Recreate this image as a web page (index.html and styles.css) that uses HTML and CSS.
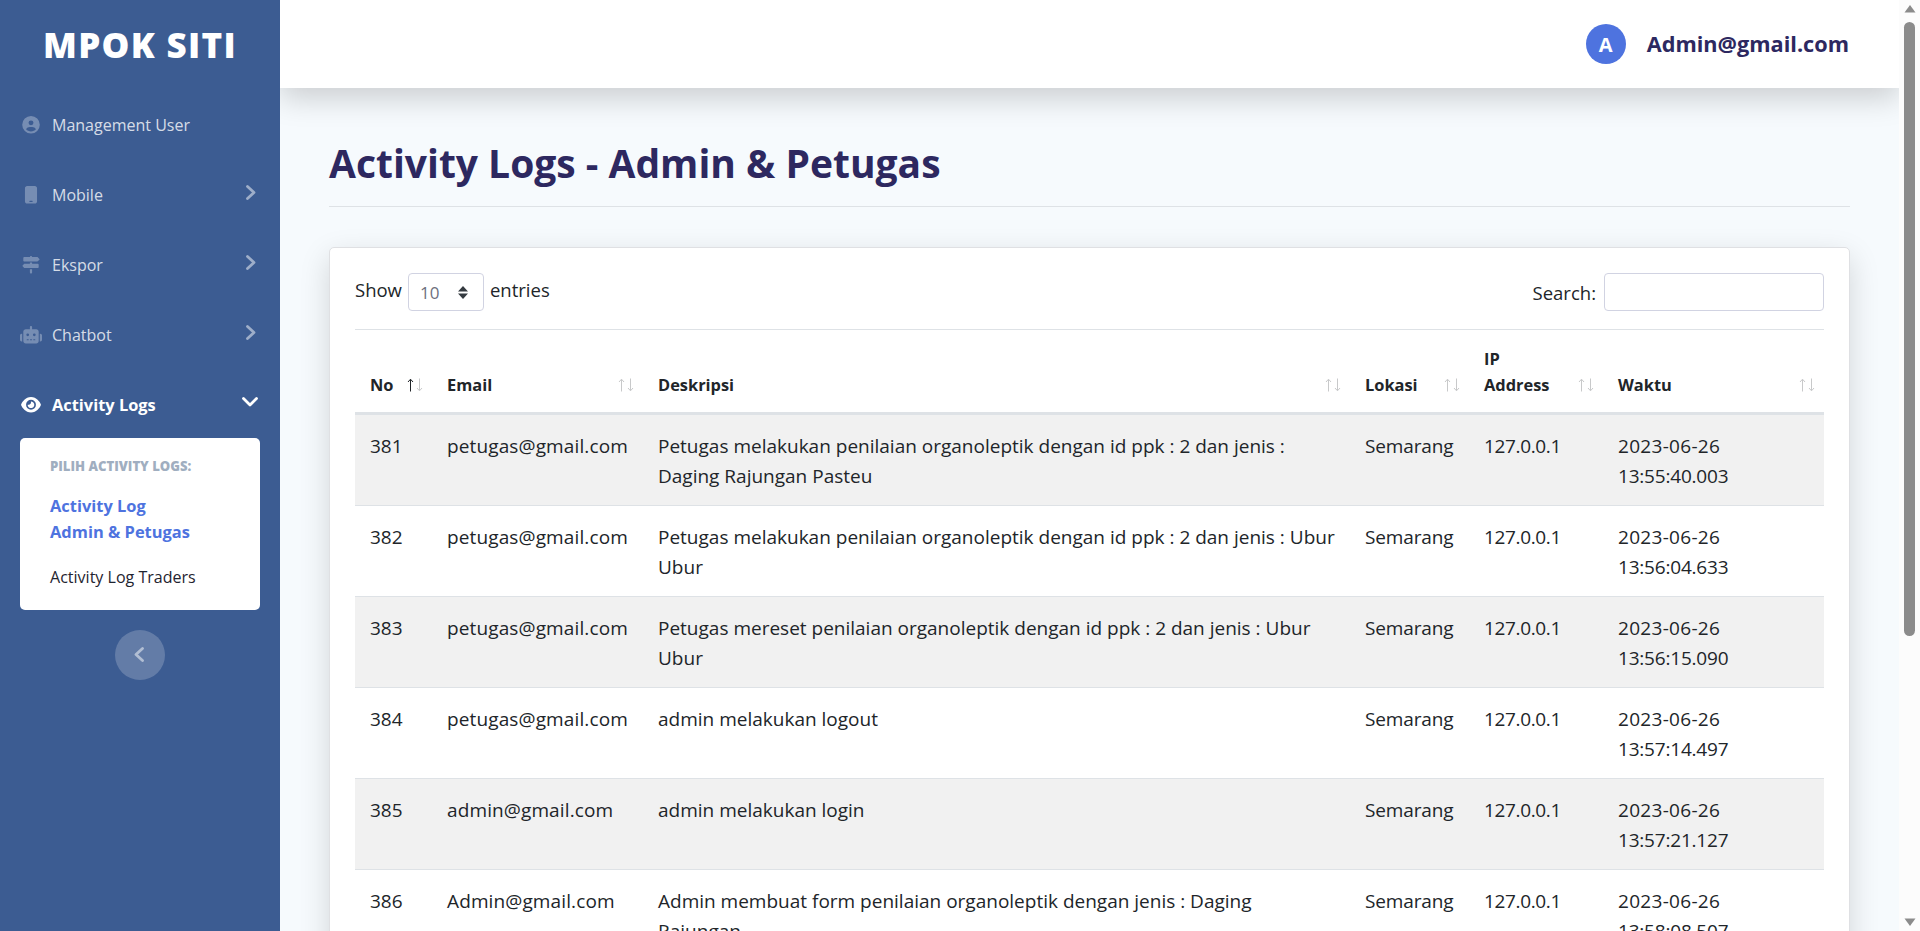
FILE: index.html
```html
<!DOCTYPE html>
<html lang="id">
<head>
<meta charset="utf-8">
<title>Activity Logs - Admin &amp; Petugas</title>
<link rel="stylesheet" href="styles.css">
</head>
<body>
<svg class="defs" width="0" height="0" aria-hidden="true">
  <symbol id="sort-up" viewBox="0 0 7 14"><path d="M3.5 13.5V1.5M1 4L3.5 1.2L6 4"/></symbol>
  <symbol id="sort-down" viewBox="0 0 7 14"><path d="M3.5 .5V12.5M1 10L3.5 12.8L6 10"/></symbol>
</svg>
<div class="app">
  <aside class="sidebar">
    <div class="brand">MPOK SITI</div>
    <nav class="menu">
      <a class="menu-item">
        <svg class="icon" width="17.6" height="17.6" viewBox="0 0 512 512"><path d="M399 384.200C376.900 345.800 335.400 320 288 320H224c-47.400 0-88.900 25.800-111 64.200c35.200 39.200 86.200 63.800 143 63.800s107.800-24.700 143-63.800zM0 256a256 256 0 1 1 512 0A256 256 0 1 1 0 256zm256 16a72 72 0 1 0 0-144 72 72 0 1 0 0 144z" fill-rule="evenodd"/></svg>
        <span>Management User</span>
      </a>
      <a class="menu-item">
        <svg class="icon" width="13.2" height="17.6" viewBox="0 0 384 512"><path fill-rule="evenodd" d="M16 64C16 28.700 44.700 0 80 0H304c35.300 0 64 28.700 64 64V448c0 35.300-28.700 64-64 64H80c-35.300 0-64-28.700-64-64V64zM144 448c0 8.800 7.200 16 16 16h64c8.800 0 16-7.200 16-16s-7.200-16-16-16H160c-8.800 0-16 7.200-16 16z"/></svg>
        <span>Mobile</span>
        <svg class="chev" width="10" height="15" viewBox="0 0 10 15"><path d="M1.500 1.500L8 7.500L1.500 13.500"/></svg>
      </a>
      <a class="menu-item">
        <svg class="icon" width="17.6" height="17.6" viewBox="0 0 512 512"><path d="M224 32H64C46.300 32 32 46.300 32 64v64c0 17.700 14.300 32 32 32H441.400c4.200 0 8.300-1.700 11.300-4.700l48-48c6.200-6.200 6.200-16.400 0-22.600l-48-48c-3-3-7.100-4.700-11.300-4.700H288c0-17.700-14.300-32-32-32s-32 14.300-32 32zM480 256c0-17.700-14.300-32-32-32H288V192H224v32H70.600c-4.200 0-8.300 1.700-11.300 4.700l-48 48c-6.200 6.200-6.200 16.400 0 22.600l48 48c3 3 7.100 4.700 11.300 4.700H448c17.700 0 32-14.300 32-32V256zM288 480V384H224v96c0 17.700 14.300 32 32 32s32-14.300 32-32z"/></svg>
        <span>Ekspor</span>
        <svg class="chev" width="10" height="15" viewBox="0 0 10 15"><path d="M1.500 1.500L8 7.500L1.500 13.500"/></svg>
      </a>
      <a class="menu-item">
        <svg class="icon" width="22" height="17.6" viewBox="0 0 640 512"><path fill-rule="evenodd" d="M320 0c17.700 0 32 14.300 32 32V96H472c39.800 0 72 32.200 72 72V440c0 39.800-32.200 72-72 72H168c-39.800 0-72-32.200-72-72V168c0-39.800 32.200-72 72-72H288V32c0-17.700 14.300-32 32-32zM208 384c-8.800 0-16 7.200-16 16s7.200 16 16 16h32c8.800 0 16-7.200 16-16s-7.200-16-16-16H208zm96 0c-8.800 0-16 7.200-16 16s7.200 16 16 16h32c8.800 0 16-7.200 16-16s-7.200-16-16-16H304zm96 0c-8.800 0-16 7.200-16 16s7.200 16 16 16h32c8.800 0 16-7.200 16-16s-7.200-16-16-16H400zM264 256a40 40 0 1 0-80 0 40 40 0 1 0 80 0zm152 40a40 40 0 1 0 0-80 40 40 0 1 0 0 80zM48 224H64V448H48c-26.500 0-48-21.500-48-48V272c0-26.500 21.500-48 48-48zm544 0c26.500 0 48 21.500 48 48V400c0 26.500-21.500 48-48 48H576V224h16z"/></svg>
        <span>Chatbot</span>
        <svg class="chev" width="10" height="15" viewBox="0 0 10 15"><path d="M1.500 1.500L8 7.500L1.500 13.500"/></svg>
      </a>
      <a class="menu-item active">
        <svg class="icon" width="19.8" height="17.6" viewBox="0 0 576 512"><path fill-rule="evenodd" d="M288 32c-80.800 0-145.500 36.800-192.600 80.600C48.600 156 17.300 208 2.500 243.700c-3.300 7.900-3.300 16.700 0 24.600C17.300 304 48.600 356 95.400 399.400C142.500 443.200 207.200 480 288 480s145.500-36.800 192.600-80.600c46.800-43.500 78.100-95.400 93-131.100c3.300-7.900 3.300-16.700 0-24.600c-14.900-35.700-46.200-87.700-93-131.100C433.500 68.800 368.800 32 288 32zM144 256a144 144 0 1 1 288 0 144 144 0 1 1 -288 0z"/><path d="M288 192c0 35.300-28.700 64-64 64c-7.100 0-13.900-1.200-20.300-3.300c-5.500-1.800-11.900 1.600-11.700 7.400c.3 6.900 1.300 13.800 3.200 20.700c13.700 51.200 66.400 81.600 117.600 67.900s81.600-66.400 67.900-117.600c-11.100-41.500-47.800-69.400-88.600-71.100c-5.800-.2-9.200 6.100-7.400 11.700c2.100 6.400 3.300 13.200 3.300 20.300z"/></svg>
        <span>Activity Logs</span>
        <svg class="chev" width="16" height="10" viewBox="0 0 16 10"><path d="M1.500 1.500L8 8L14.500 1.500"/></svg>
      </a>
    </nav>
    <div class="submenu">
      <h6 class="submenu-title">Pilih Activity Logs:</h6>
      <a class="submenu-link current">Activity Log<br>Admin &amp; Petugas</a>
      <a class="submenu-link">Activity Log Traders</a>
    </div>
    <button class="collapse"><svg width="10" height="15" viewBox="0 0 10 15"><path d="M8.500 1.500L2 7.500L8.500 13.500"/></svg></button>
  </aside>

  <div class="main">
    <header class="topbar">
      <span class="avatar">A</span>
      <span class="account">Admin@gmail.com</span>
    </header>
    <main class="content">
      <h1 class="title">Activity Logs - Admin &amp; Petugas</h1>
      <section class="card">
        <div class="controls">
          <div class="length">
            <span class="length-text">Show</span>
            <span class="select">10<svg width="10" height="13" viewBox="0 0 10 13"><path d="M5 0L10 5.500H0zM5 13L0 7.500H10z"/></svg></span>
            <span class="length-text">entries</span>
          </div>
          <label class="search">Search:<input type="text"></label>
        </div>
        <table class="logs">
          <colgroup><col class="c-no"><col class="c-email"><col class="c-desc"><col class="c-loc"><col class="c-ip"><col class="c-time"></colgroup>
          <thead>
            <tr>
              <th>No<span class="sort asc"><svg><use href="#sort-up"/></svg><svg><use href="#sort-down"/></svg></span></th>
              <th>Email<span class="sort"><svg><use href="#sort-up"/></svg><svg><use href="#sort-down"/></svg></span></th>
              <th>Deskripsi<span class="sort"><svg><use href="#sort-up"/></svg><svg><use href="#sort-down"/></svg></span></th>
              <th>Lokasi<span class="sort"><svg><use href="#sort-up"/></svg><svg><use href="#sort-down"/></svg></span></th>
              <th>IP<br>Address<span class="sort"><svg><use href="#sort-up"/></svg><svg><use href="#sort-down"/></svg></span></th>
              <th>Waktu<span class="sort"><svg><use href="#sort-up"/></svg><svg><use href="#sort-down"/></svg></span></th>
            </tr>
          </thead>
          <tbody>
            <tr><td>381</td><td class="email">petugas@gmail.com</td><td>Petugas melakukan penilaian organoleptik dengan id ppk : 2 dan jenis :<br>Daging Rajungan Pasteu</td><td class="loc">Semarang</td><td class="ip">127.0.0.1</td><td class="date">2023-06-26<br><span class="time">13:55:40.003</span></td></tr>
            <tr><td>382</td><td class="email">petugas@gmail.com</td><td>Petugas melakukan penilaian organoleptik dengan id ppk : 2 dan jenis : Ubur<br>Ubur</td><td class="loc">Semarang</td><td class="ip">127.0.0.1</td><td class="date">2023-06-26<br><span class="time">13:56:04.633</span></td></tr>
            <tr><td>383</td><td class="email">petugas@gmail.com</td><td>Petugas mereset penilaian organoleptik dengan id ppk : 2 dan jenis : Ubur<br>Ubur</td><td class="loc">Semarang</td><td class="ip">127.0.0.1</td><td class="date">2023-06-26<br><span class="time">13:56:15.090</span></td></tr>
            <tr><td>384</td><td class="email">petugas@gmail.com</td><td>admin melakukan logout</td><td class="loc">Semarang</td><td class="ip">127.0.0.1</td><td class="date">2023-06-26<br><span class="time">13:57:14.497</span></td></tr>
            <tr><td>385</td><td class="email">admin@gmail.com</td><td>admin melakukan login</td><td class="loc">Semarang</td><td class="ip">127.0.0.1</td><td class="date">2023-06-26<br><span class="time">13:57:21.127</span></td></tr>
            <tr><td>386</td><td class="email">Admin@gmail.com</td><td>Admin membuat form penilaian organoleptik dengan jenis : Daging<br>Rajungan</td><td class="loc">Semarang</td><td class="ip">127.0.0.1</td><td class="date">2023-06-26<br><span class="time">13:58:08.507</span></td></tr>
          </tbody>
        </table>
      </section>
    </main>
  </div>

  <div class="scrollbar">
    <svg width="12" height="8" viewBox="0 0 12 8"><path d="M6 0L11.500 7.500H.5z"/></svg>
    <div class="thumb"></div>
    <svg width="12" height="8" viewBox="0 0 12 8"><path d="M6 8L.5 .5H11.500z"/></svg>
  </div>
</div>
</body>
</html>
```
FILE: styles.css
```css
* { box-sizing: border-box; }

html, body { height: 100%; overflow: hidden; }

body {
  margin: 0;
  font-family: "Open Sans", "Noto Sans", sans-serif;
  font-size: 19px;
  line-height: 30px;
  color: #212529;
  background: #f6fafd;
}

.defs { position: absolute; }

.app { display: flex; height: 100vh; overflow: hidden; }

/* Sidebar */
.sidebar {
  z-index: 1;
  display: flex;
  flex: none;
  flex-direction: column;
  width: 280px;
  background: #3c5c92;
}

.brand {
  height: 90px;
  line-height: 90px;
  text-align: center;
  font-size: 35px;
  font-weight: 800;
  letter-spacing: 1.300px;
  color: #fff;
}

.menu-item {
  display: flex;
  align-items: center;
  height: 70px;
  padding: 0 24px 0 20px;
  font-size: 16px;
  color: rgba(255, 255, 255, .8);
}

.menu-item span { flex: 1; }

.icon { fill: rgba(255, 255, 255, .3); }

.menu-item .icon { flex: 0 0 22px; margin-right: 10px; }

.chev {
  margin-top: -5px;
  fill: none;
  stroke: rgba(255, 255, 255, .5);
  stroke-width: 2.8;
  stroke-linecap: round;
  stroke-linejoin: round;
}

.menu-item.active {
  height: 68px;
  padding-top: 1px;
  padding-right: 22px;
  font-size: 16.400px;
  font-weight: 700;
  color: #fff;
}

.active .icon { fill: #fff; }
.active .chev { stroke: #fff; }

.submenu {
  height: 172px;
  margin: 0 20px;
  padding: 14px 30px;
  border-radius: 5px;
  background: #fff;
}

.submenu-title {
  margin: 0 0 13px;
  line-height: 28px;
  font-size: 13.100px;
  font-weight: 800;
  text-transform: uppercase;
  white-space: nowrap;
  color: #a0aec0;
}

.submenu-link {
  display: block;
  margin-bottom: 19px;
  line-height: 26px;
  font-size: 16.050px;
  white-space: nowrap;
  color: #1f2430;
}

.submenu-link.current { font-size: 16.450px; font-weight: 700; color: #4e73df; }

.collapse {
  display: flex;
  align-items: center;
  justify-content: center;
  align-self: center;
  width: 50px;
  height: 50px;
  margin-top: 20px;
  padding: 0 3px 2px 0;
  border: 0;
  border-radius: 50%;
  background: rgba(255, 255, 255, .2);
}

.collapse path {
  fill: none;
  stroke: rgba(255, 255, 255, .5);
  stroke-width: 2.800;
  stroke-linecap: round;
  stroke-linejoin: round;
}

/* Main column */
.main { flex: 1; min-width: 0; overflow: hidden; }

.topbar {
  display: flex;
  align-items: center;
  justify-content: flex-end;
  gap: 21px;
  height: 88px;
  padding: 0 50px 0 0;
  background: #fff;
  box-shadow: 0 10px 30px rgba(0, 0, 0, .18);
}

.avatar {
  width: 40px;
  height: 40px;
  border-radius: 50%;
  line-height: 42px;
  text-align: center;
  font-size: 20px;
  font-weight: 700;
  color: #fff;
  background: #4e73df;
}

.account { font-size: 21.700px; font-weight: 700; color: #2d2860; }

.content { padding: 48px 49px 0 49px; }

.title {
  margin: 0 0 40px;
  padding-bottom: 17px;
  border-bottom: 1px solid #dee2e6;
  line-height: 53px;
  font-size: 39px;
  font-weight: 700;
  color: #2d2860;
}

.card {
  height: 900px;
  padding: 25px;
  border: 1px solid #dfe0e3;
  border-radius: 5px;
  background: #fff;
  box-shadow: 0 10px 30px rgba(0, 0, 0, .15);
}

.controls {
  display: flex;
  justify-content: space-between;
  height: 56px;
}

.length { display: flex; gap: 6px; font-size: 18.500px; }
.length-text { line-height: 34px; }

.select {
  display: flex;
  align-items: center;
  justify-content: space-between;
  width: 76px;
  height: 38px;
  padding: 1px 15px 0 11px;
  border: 1px solid #d1d3e2;
  border-radius: 4px;
  font-size: 17px;
  color: #6e707e;
}

.select svg { fill: #343a40; }

.search { display: flex; gap: 8px; line-height: 39px; font-size: 18.500px; }

.search input {
  width: 220px;
  height: 38px;
  border: 1px solid #d1d3e2;
  border-radius: 4px;
  background: #fff;
}

/* Log table */
.logs {
  width: 100%;
  table-layout: fixed;
  border-spacing: 0;
}

.c-no { width: 77px; }
.c-email { width: 211px; }
.c-desc { width: 707px; }
.c-loc { width: 119px; }
.c-ip { width: 134px; }

.logs th {
  position: relative;
  padding: 16px 15px 14px;
  border-top: 1px solid #dee2e6;
  border-bottom: 3px solid #dee2e6;
  line-height: 26px;
  font-size: 16.400px;
  text-align: left;
  vertical-align: bottom;
}

.sort {
  position: absolute;
  right: 9px;
  bottom: 20px;
  display: flex;
  gap: 2px;
}

.sort svg { width: 7px; height: 14px; fill: none; stroke: #c8c9ca; }
.sort.asc svg:first-child { stroke: #212529; }

.logs td {
  padding: 16px 15px 14px;
  border-top: 1px solid #dee2e6;
  vertical-align: top;
  white-space: nowrap;
}

.logs tbody tr:first-child td { border-top: 0; }
.logs tbody tr:nth-child(odd) { background: #f1f1f1; }
.email { letter-spacing: .120px; }
.loc { letter-spacing: -.150px; }
.ip { letter-spacing: -.350px; }
.date { letter-spacing: .300px; }
.time { letter-spacing: -.200px; }

/* Page scrollbar */
.scrollbar {
  display: flex;
  flex: none;
  flex-direction: column;
  align-items: center;
  width: 21px;
  padding: 5px 0;
  background: #fcfcfc;
}

.scrollbar svg { fill: #8b8b8b; }

.thumb {
  width: 11px;
  height: 614px;
  margin: 9px 0 auto;
  border-radius: 6px;
  background: #8b8b8b;
}
```
